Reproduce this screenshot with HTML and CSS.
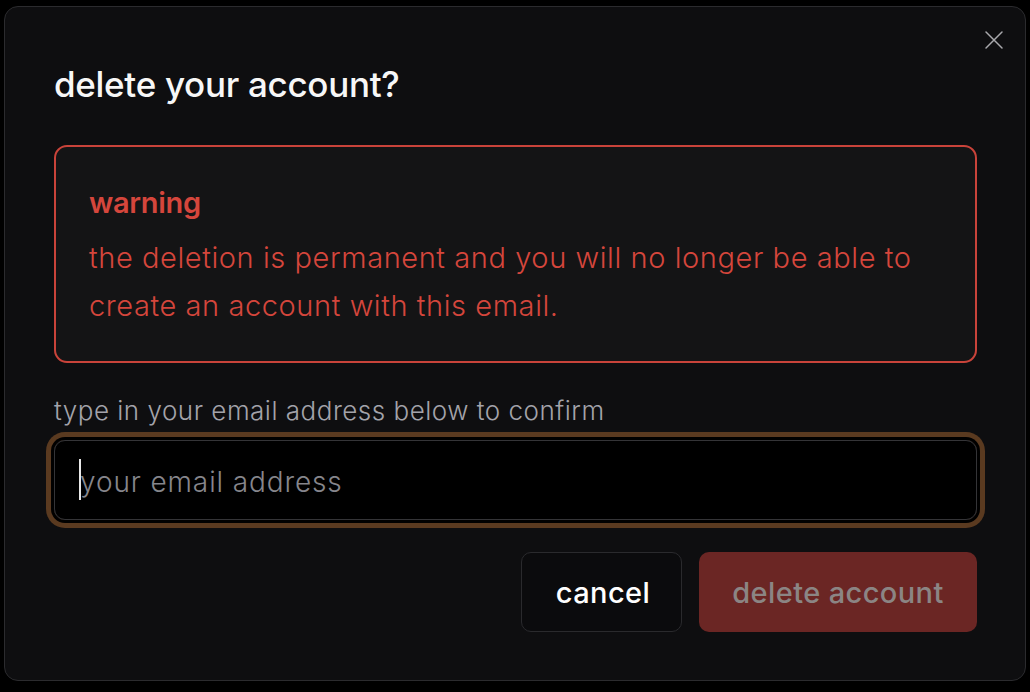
FILE: index.html
```html
<!DOCTYPE html>
<html lang="en">
<head>
<meta charset="utf-8">
<title>delete your account?</title>
<link rel="stylesheet" href="styles.css">
</head>
<body>
<div class="modal" role="dialog" aria-labelledby="dlg-title">
  <button class="close" aria-label="close">
    <svg width="20" height="20" viewBox="0 0 20 20" fill="none" stroke="currentColor" stroke-width="1.5" stroke-linecap="round">
      <path d="M2 2 L18 18 M18 2 L2 18"/>
    </svg>
  </button>
  <h2 class="title" id="dlg-title">delete your account?</h2>
  <div class="warning">
    <div class="warning-title">warning</div>
    <p class="warning-text">the deletion is permanent and you will no longer be able to create an account with this email.</p>
  </div>
  <label class="label" for="email">type in your email address below to confirm</label>
  <div class="field">
    <input class="input" id="email" type="email" placeholder="your email address">
    <span class="caret"></span>
  </div>
  <div class="actions">
    <button class="btn btn-cancel">cancel</button>
    <button class="btn btn-delete" disabled>delete account</button>
  </div>
</div>
</body>
</html>
```

FILE: styles.css
```css
* { box-sizing: border-box; }
html, body { margin: 0; padding: 0; }
body {
  background: #000;
  width: 1030px;
  height: 692px;
  overflow: hidden;
  font-family: Inter, "Noto Sans", sans-serif;
  padding: 6px 4px 0 4px;
}
.modal {
  position: relative;
  width: 1022px;
  height: 675px;
  background: #0e0e10;
  border: 1px solid #2b2b2e;
  border-radius: 14px;
  padding: 48px 48px 48px 49px;
  display: flex;
  flex-direction: column;
}
.close {
  position: absolute;
  top: 21px;
  right: 19px;
  width: 24px;
  height: 24px;
  padding: 0;
  margin: 0;
  border: 0;
  background: transparent;
  color: #a9a9ad;
  display: flex;
  align-items: center;
  justify-content: center;
}
.close svg { width: 20px; height: 20px; }
.title {
  margin: 0;
  font-size: 35px;
  line-height: 58px;
  font-weight: 500;
  color: #f7f7f7;
  letter-spacing: -0.3px;
}
.warning {
  margin-top: 32px;
  height: 218px;
  flex-shrink: 0;
  border: 2px solid #c9433a;
  border-radius: 13px;
  background: #141415;
  padding: 36px 32px 0 33px;
  color: #d5463c;
}
.warning-title {
  font-size: 29px;
  line-height: 40px;
  font-weight: 600;
  letter-spacing: -0.3px;
}
.warning-text {
  margin: 11px 0 0 0;
  font-size: 29px;
  line-height: 48px;
  font-weight: 300;
  letter-spacing: 0.58px;
}
.label {
  display: block;
  margin-top: 32px;
  font-size: 26px;
  line-height: 32px;
  font-weight: 300;
  letter-spacing: 0.5px;
  color: #a3a3aa;
}
.field {
  position: relative;
  margin-top: 13px;
  height: 80px;
  flex-shrink: 0;
  border-radius: 11px;
  box-shadow: 0 0 0 3px #000, 0 0 0 8px #5a3a20;
}
.input {
  display: block;
  width: 100%;
  height: 80px;
  margin: 0;
  background: #000;
  border: 1px solid #343437;
  border-radius: 11px;
  padding: 3px 25px 0 25px;
  font-family: inherit;
  font-size: 28px;
  font-weight: 300;
  letter-spacing: 0.88px;
  color: #f0f0f0;
  outline: none;
}
.input::placeholder { color: #86868c; }
.caret {
  position: absolute;
  left: 25px;
  top: 19px;
  width: 2px;
  height: 41px;
  background: #e8e8e8;
}
.actions {
  margin-top: 32px;
  display: flex;
  justify-content: flex-end;
  gap: 17px;
}
.btn {
  height: 80px;
  border-radius: 10px;
  font-family: inherit;
  font-size: 29px;
  font-weight: 500;
  letter-spacing: 0.4px;
  padding: 0;
  margin: 0;
}
.btn-cancel {
  width: 161px;
  background: #0b0b0d;
  border: 1px solid #2a2a2d;
  color: #fff;
  padding-left: 3px;
}
.btn-delete {
  width: 278px;
  background: #6b2624;
  border: 0;
  color: #8b8584;
}
```
